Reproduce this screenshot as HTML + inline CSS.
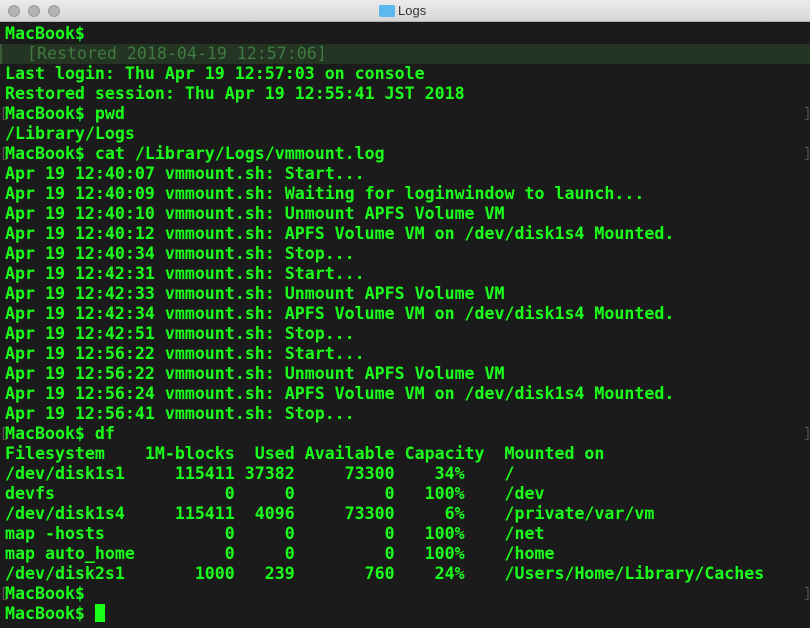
<!DOCTYPE html>
<html><head><meta charset="utf-8"><style>
html,body{margin:0;padding:0;width:810px;height:628px;overflow:hidden;background:#1b1b1b}
.tb{position:absolute;left:0;top:0;width:810px;height:22px;background:linear-gradient(#ececec,#d6d6d6);border-bottom:1px solid #b0b0b0;box-sizing:border-box}
.dot{position:absolute;top:5px;width:12px;height:12px;border-radius:50%;background:#b4b4b4;border:1px solid #999;box-sizing:border-box}
.title{position:absolute;left:398px;top:3px;font:13px "Liberation Sans",sans-serif;color:#333}
.fold{position:absolute;left:379px;top:5px;width:16px;height:12px;background:#5cb8ee;border-radius:2px}
pre{position:absolute;left:5px;top:24px;margin:0;font:bold 16.6px/20px "DejaVu Sans Mono","Liberation Mono",monospace;color:#1aff1a;white-space:pre}
.rs{position:absolute;left:0;top:44px;width:810px;height:20px;background:#243524;border-left:2px solid #3a5a3a;box-sizing:border-box}
.rs span{position:absolute;left:25px;top:0;font:16.6px/20px "DejaVu Sans Mono","Liberation Mono",monospace;color:#3f7a3f}
.br{position:absolute;font:14px/20px "Liberation Mono",monospace;color:#555}
.cur{display:inline-block;width:10px;height:18px;background:#1aff1a;vertical-align:-3px}
</style></head><body>
<div class="tb"><div class="dot" style="left:8px"></div><div class="dot" style="left:28px"></div><div class="dot" style="left:48px"></div><div class="fold"></div><div class="title">Logs</div></div>
<div class="rs"><span>[Restored 2018-04-19 12:57:06]</span></div>
<div class="br" style="left:0;top:104px">[</div><div class="br" style="left:803px;top:104px">]</div>
<div class="br" style="left:0;top:144px">[</div><div class="br" style="left:803px;top:144px">]</div>
<div class="br" style="left:0;top:424px">[</div><div class="br" style="left:803px;top:424px">]</div>
<div class="br" style="left:0;top:584px">[</div><div class="br" style="left:803px;top:584px">]</div>
<pre>MacBook$

Last login: Thu Apr 19 12:57:03 on console
Restored session: Thu Apr 19 12:55:41 JST 2018
MacBook$ pwd
/Library/Logs
MacBook$ cat /Library/Logs/vmmount.log
Apr 19 12:40:07 vmmount.sh: Start...
Apr 19 12:40:09 vmmount.sh: Waiting for loginwindow to launch...
Apr 19 12:40:10 vmmount.sh: Unmount APFS Volume VM
Apr 19 12:40:12 vmmount.sh: APFS Volume VM on /dev/disk1s4 Mounted.
Apr 19 12:40:34 vmmount.sh: Stop...
Apr 19 12:42:31 vmmount.sh: Start...
Apr 19 12:42:33 vmmount.sh: Unmount APFS Volume VM
Apr 19 12:42:34 vmmount.sh: APFS Volume VM on /dev/disk1s4 Mounted.
Apr 19 12:42:51 vmmount.sh: Stop...
Apr 19 12:56:22 vmmount.sh: Start...
Apr 19 12:56:22 vmmount.sh: Unmount APFS Volume VM
Apr 19 12:56:24 vmmount.sh: APFS Volume VM on /dev/disk1s4 Mounted.
Apr 19 12:56:41 vmmount.sh: Stop...
MacBook$ df
Filesystem    1M-blocks  Used Available Capacity  Mounted on
/dev/disk1s1     115411 37382     73300    34%    /
devfs                 0     0         0   100%    /dev
/dev/disk1s4     115411  4096     73300     6%    /private/var/vm
map -hosts            0     0         0   100%    /net
map auto_home         0     0         0   100%    /home
/dev/disk2s1       1000   239       760    24%    /Users/Home/Library/Caches
MacBook$
MacBook$ <span class="cur"></span></pre>
</body></html>
